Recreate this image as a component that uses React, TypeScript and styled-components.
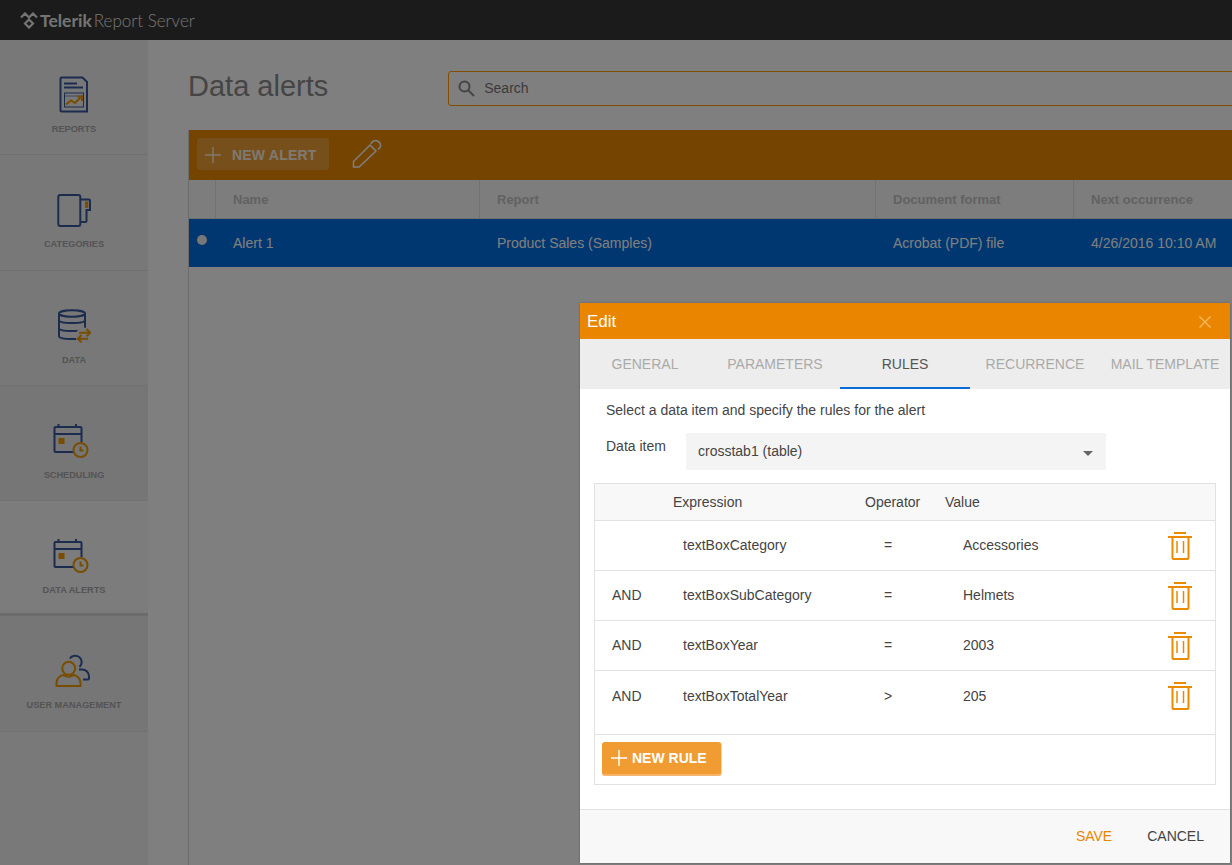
import React from "react";
import styled, { createGlobalStyle } from "styled-components";

const navy = "#37599f";
const amber = "#f09a00";

const GlobalStyle = createGlobalStyle`
  html, body {
    margin: 0;
    height: 100%;
    overflow: hidden;
    font-family: "Liberation Sans", Arial, sans-serif;
  }
  #root {
    height: 100%;
  }
  * {
    box-sizing: border-box;
  }
`;

const Page = styled.div`
  position: relative;
  width: 100%;
  height: 865px;
  display: flex;
  flex-direction: column;
  background: #fff;
  overflow: hidden;
`;

const TopBar = styled.header`
  height: 40px;
  flex: none;
  display: flex;
  align-items: center;
  gap: 2px;
  padding-left: 20px;
  background: #363636;
  color: #e8e8e8;
`;

const LogoBold = styled.span`
  font-family: Lato, sans-serif;
  font-size: 17.5px;
  font-weight: 700;
`;

const LogoLight = styled.span`
  font-family: Lato, sans-serif;
  font-size: 17px;
  font-weight: 300;
`;

const Body = styled.div`
  flex: 1;
  display: flex;
  min-height: 0;
`;

const Sidebar = styled.nav`
  width: 148px;
  flex: none;
  background: #f2f2f2;
`;

const NavItem = styled.div<{ $state?: "hover" | "active" }>`
  height: 115.3px;
  display: flex;
  flex-direction: column;
  align-items: center;
  justify-content: flex-start;
  padding-top: 36px;
  border-bottom: 1px solid #e2e2e2;
  background: ${(p) =>
    p.$state === "active" ? "#f8f8f8" : p.$state === "hover" ? "#ededed" : "#f0f0f0"};
  ${(p) => p.$state === "active" && "border-bottom: 3px solid #d8d8d8;"}
`;

const NavIcon = styled.div`
  height: 38px;
  display: flex;
  align-items: center;
  justify-content: center;
`;

const NavLabel = styled.span`
  margin-top: 10px;
  font-size: 9.2px;
  line-height: 11px;
  font-weight: 700;
  color: #a8a8a8;
`;

const Main = styled.main`
  flex: 1;
  min-width: 0;
  display: flex;
  flex-direction: column;
  padding-left: 40px;
  overflow: hidden;
`;

const TitleRow = styled.div`
  height: 90px;
  flex: none;
  display: flex;
  align-items: center;
  gap: 120px;
`;

const Title = styled.h1`
  margin: 2px 0 0;
  font-size: 29px;
  line-height: 34px;
  font-weight: 400;
  color: #8a8a8a;
`;

const SearchBox = styled.div`
  flex: 1;
  height: 35px;
  margin: 6px -4px 0 0;
  display: flex;
  align-items: center;
  gap: 9px;
  padding-left: 9px;
  border: 1px solid #ff9c00;
  border-radius: 3px;
  font-size: 14px;
  color: #777;
`;

const Grid = styled.section`
  flex: 1;
  border-left: 1px solid #d8d8d8;
`;

const Toolbar = styled.div`
  height: 50px;
  display: flex;
  align-items: center;
  gap: 23px;
  padding: 0 0 2px 8px;
  background: #ea8a00;
`;

const ToolButton = styled.div`
  width: 132px;
  height: 32px;
  display: flex;
  align-items: center;
  gap: 11px;
  padding: 2px 0 0 8px;
  border-radius: 3px;
  background: #f0a23a;
  color: #fff;
  font-size: 14px;
  letter-spacing: 0.2px;
  font-weight: 700;
  opacity: 0.9;
`;

const COLUMNS = "26px 264px 396px 198px 1fr";

const GridHeader = styled.div`
  height: 39px;
  display: grid;
  grid-template-columns: ${COLUMNS};
  background: #fafafa;
  border-bottom: 1px solid #e0e0e0;
`;

const HeaderCell = styled.div`
  display: flex;
  align-items: center;
  padding-left: 17px;
  border-left: 1px solid #e4e4e4;
  font-size: 13px;
  font-weight: 700;
  color: #c4c4c4;
  white-space: nowrap;

  &:first-child {
    border-left: 0;
  }
`;

const GridRow = styled.div`
  height: 48px;
  display: grid;
  grid-template-columns: ${COLUMNS};
  align-items: center;
  background: #006ee0;
  color: #fff;
  font-size: 14px;
`;

const RowCell = styled.div`
  padding-left: 18px;
  white-space: nowrap;
`;

const RowMarker = styled.div`
  align-self: stretch;
  display: flex;
  align-items: center;
  padding: 0 0 6px 8px;
`;

const RowDot = styled.span`
  display: block;
  width: 10px;
  height: 10px;
  border-radius: 50%;
  background: #f0f0f0;
`;

const Scrim = styled.div`
  position: absolute;
  inset: 0;
  background: rgba(0, 0, 0, 0.5);
`;

const Dialog = styled.div`
  position: absolute;
  left: 580px;
  top: 303px;
  width: 650px;
  height: 560px;
  display: flex;
  flex-direction: column;
  background: #fff;
  box-shadow: 0 0 2px rgba(0, 0, 0, 0.3);
`;

const DialogTitle = styled.div`
  height: 36px;
  flex: none;
  display: flex;
  align-items: center;
  justify-content: space-between;
  padding: 1px 19px 0 7px;
  background: #ea8500;
  color: #fff;
  font-size: 17px;
`;

const Tabs = styled.div`
  height: 50px;
  flex: none;
  display: grid;
  grid-template-columns: repeat(5, 130px);
  background: #ededed;
`;

const Tab = styled.div<{ $active?: boolean }>`
  display: flex;
  align-items: center;
  justify-content: center;
  padding-top: 2px;
  font-size: 14px;
  white-space: nowrap;
  color: ${(p) => (p.$active ? "#555" : "#aaa")};
  border-bottom: 2px solid ${(p) => (p.$active ? "#0a6cd6" : "transparent")};
`;

const DialogBody = styled.div`
  flex: 1;
  min-height: 0;
  padding: 13px 14px 0;
  font-size: 14px;
  color: #444;
`;

const Hint = styled.p`
  margin: 0 0 0 12px;
  line-height: 16px;
`;

const FieldRow = styled.div`
  display: flex;
  align-items: flex-start;
  margin: 15px 0 13px 12px;
`;

const FieldLabel = styled.label`
  width: 80px;
  padding-top: 5px;
  line-height: 16px;
`;

const SelectBox = styled.div`
  width: 420px;
  height: 37px;
  display: flex;
  align-items: center;
  justify-content: space-between;
  padding: 0 13px 2px 12px;
  background: #f4f4f4;
`;

const Caret = styled.span`
  width: 0;
  height: 0;
  margin-top: 5px;
  border-left: 5px solid transparent;
  border-right: 5px solid transparent;
  border-top: 5px solid #666;
`;

const RulesPanel = styled.div`
  width: 622px;
  height: 302px;
  border: 1px solid #e2e2e2;
  display: flex;
  flex-direction: column;
`;

const RULE_COLUMNS = "78px 192px 80px 1fr 50px";

const RulesHeader = styled.div`
  height: 37px;
  flex: none;
  display: grid;
  grid-template-columns: ${RULE_COLUMNS};
  align-items: center;
  background: #f8f8f8;
  border-bottom: 1px solid #e2e2e2;
`;

const RulesBody = styled.div`
  flex: 1;
  min-height: 0;
  border-bottom: 1px solid #e2e2e2;
`;

const RuleRow = styled.div<{ $last?: boolean }>`
  height: 50px;
  display: grid;
  grid-template-columns: ${RULE_COLUMNS};
  align-items: center;
  border-bottom: ${(p) => (p.$last ? "0" : "1px solid #e2e2e2")};
`;

const RuleCell = styled.span<{ $indent?: number; $flush?: boolean }>`
  padding-left: ${(p) => p.$indent ?? 0}px;
  padding-bottom: ${(p) => (p.$flush ? 0 : 2)}px;
`;

const TrashButton = styled.span`
  display: flex;
  padding-left: 3px;
`;

const RulesFooter = styled.div`
  height: 49px;
  flex: none;
  padding: 7px 7px 0;
`;

const AddButton = styled.div`
  width: 119px;
  height: 34px;
  display: flex;
  align-items: center;
  gap: 5px;
  padding-left: 9px;
  border-radius: 3px;
  background: #f09c33;
  border-bottom: 2px solid #f6b36a;
  box-shadow: 1px 0 0 #f8cfa0;
  color: #fff;
  font-size: 14px;
  font-weight: 700;
`;

const DialogFooter = styled.div`
  height: 54px;
  flex: none;
  display: flex;
  align-items: center;
  justify-content: flex-end;
  gap: 35px;
  padding: 0 26px 2px 0;
  background: #f8f8f8;
  border-top: 1px solid #e2e2e2;
  font-size: 14px;
`;

const FooterAction = styled.span<{ $primary?: boolean }>`
  color: ${(p) => (p.$primary ? "#ea8500" : "#444")};
`;

const Plus = ({ color, size }: { color: string; size: number }) => (
  <svg width={size} height={size} viewBox="0 0 16 16">
    <path d="M8 0v16M0 8h16" stroke={color} strokeWidth="1.4" fill="none" />
  </svg>
);

const LogoMark = () => (
  <svg width="18" height="17" viewBox="0 0 18 17" fill="none" stroke="#e8e8e8" strokeWidth="2.200">
    <path d="M1 5.500 5 1.500 9 5.500 13 1.500 17 5.500" />
    <path d="M9 7.500 13 11.500 9 15.500 5 11.500Z" />
  </svg>
);

const ReportsIcon = () => (
  <svg width="30" height="38" viewBox="0 0 30 38" fill="none">
    <path d="M2.500 1.500h21l4.500 4.500v29.500H2.500a1 1 0 0 1-1-1V2.500a1 1 0 0 1 1-1Z" stroke={navy} strokeWidth="2" />
    <path d="M5 7.500h13M5 11.500h19" stroke={navy} strokeWidth="2" />
    <rect x="5.500" y="17" width="19" height="14" stroke={navy} strokeWidth="1" />
    <path d="M6 20h18" stroke={navy} strokeWidth="1" opacity=".6" />
    <path d="M7 28.500l5-4 4 2.500 5.500-5.500" stroke={amber} strokeWidth="2" />
    <path d="M18.500 20.500h4.500v4.500" stroke={amber} strokeWidth="2" />
  </svg>
);

const CategoriesIcon = () => (
  <svg width="36" height="36" viewBox="0 0 36 36" fill="none">
    <rect x="2.300" y="3" width="22" height="31" rx="2" stroke={navy} strokeWidth="2" />
    <path d="M25 7.500h8a1 1 0 0 1 1 1V18h-3.500v11a1 1 0 0 1-1 1H25" stroke={navy} strokeWidth="2" />
    <rect x="29" y="9.500" width="3.300" height="6.300" fill={amber} />
  </svg>
);

const DataIcon = () => (
  <svg width="34" height="34" viewBox="0 0 34 34" fill="none">
    <ellipse cx="15" cy="4.500" rx="13" ry="3.200" stroke={navy} strokeWidth="2" />
    <path d="M2 5v6c0 2 6 3 13 3s13-1 13-3V5" stroke={navy} strokeWidth="2" />
    <path d="M2 11v8c0 2 6 3 13 3s13-1 13-3v-8" stroke={navy} strokeWidth="2" />
    <path d="M2 19v8c0 2 6 3 13 3s13-1 13-3v-8" stroke={navy} strokeWidth="2" />
    <circle cx="27" cy="27" r="8.500" fill="#ececec" />
    <path d="M22 23.700h11M29.500 20l3.700 3.700-3.700 3.700" stroke={amber} strokeWidth="2" />
    <path d="M31 29.700H21M24.500 26l-3.700 3.700 3.700 3.700" stroke={amber} strokeWidth="2" />
  </svg>
);

const CalendarIcon = () => (
  <svg width="43" height="36" viewBox="0 0 43 36" fill="none">
    <path d="M21 29H2.500a1 1 0 0 1-1-1V5a1 1 0 0 1 1-1h25a1 1 0 0 1 1 1v14" stroke={navy} strokeWidth="2" />
    <path d="M2 11h26M5.500 1v4M23 1v4" stroke={navy} strokeWidth="2" />
    <rect x="5.500" y="15" width="6" height="6" fill={amber} />
    <circle cx="27.500" cy="27" r="7" stroke={amber} strokeWidth="2" />
    <path d="M27.500 23.500v4h3" stroke={amber} strokeWidth="2" />
  </svg>
);

const UsersIcon = () => (
  <svg width="38" height="34" viewBox="0 0 38 34" fill="none">
    <path d="M14.800 4.500A6.500 6.500 0 1 1 24.500 13" stroke={navy} strokeWidth="2" />
    <path d="M24 15.500h3c4 0 7 3 7 7v2a1 1 0 0 1-1 1h-5" stroke={navy} strokeWidth="2" />
    <circle cx="13.700" cy="14.300" r="6.500" stroke={amber} strokeWidth="2" fill="#ededed" />
    <path d="M1.500 32v-3c0-4 3-7.500 7-8 3 2 7 2 10 0 4 .5 7 4 7 8v3Z" stroke={amber} strokeWidth="2" fill="#ededed" />
  </svg>
);

const SearchIcon = () => (
  <svg width="17" height="17" viewBox="0 0 17 17" fill="none" stroke="#888" strokeWidth="2">
    <circle cx="6.500" cy="6.500" r="5" />
    <path d="M10.500 10.500 16 16" />
  </svg>
);

const PencilIcon = () => (
  <svg width="30" height="30" viewBox="0 0 30 30" fill="none" stroke="#fff" strokeWidth="1.500">
    <path d="M1.500 28v-5.500L18 6l6 6L7 28Z" />
    <path d="M19 5c1-3 4-4 6.500-3s4 4 2.500 6.500l-2 2" />
  </svg>
);

const CloseIcon = () => (
  <svg width="12" height="12" viewBox="0 0 12 12" stroke="#f7b860" strokeWidth="1.400">
    <path d="M.5.500l11 11M11.500.500l-11 11" />
  </svg>
);

const TrashIcon = () => (
  <svg width="24" height="28" viewBox="0 0 24 28" fill="none" stroke="#ea8a00" strokeWidth="2">
    <path d="M0 5h24M6 1h12" />
    <path d="M4.500 5v21a1 1 0 0 0 1 1h14a1 1 0 0 0 1-1V5" />
    <path d="M9 9v12M15.500 9v12" strokeWidth="1.500" />
  </svg>
);

const navItems = [
  { label: "REPORTS", icon: <ReportsIcon /> },
  { label: "CATEGORIES", icon: <CategoriesIcon /> },
  { label: "DATA", icon: <DataIcon /> },
  { label: "SCHEDULING", icon: <CalendarIcon />, state: "hover" as const },
  { label: "DATA ALERTS", icon: <CalendarIcon />, state: "active" as const },
  { label: "USER MANAGEMENT", icon: <UsersIcon />, state: "hover" as const },
];

const rules = [
  { join: "", expression: "textBoxCategory", operator: "=", value: "Accessories" },
  { join: "AND", expression: "textBoxSubCategory", operator: "=", value: "Helmets" },
  { join: "AND", expression: "textBoxYear", operator: "=", value: "2003" },
  { join: "AND", expression: "textBoxTotalYear", operator: ">", value: "205" },
];

const tabs = ["GENERAL", "PARAMETERS", "RULES", "RECURRENCE", "MAIL TEMPLATE"];

const App: React.FC = () => {
  return (
    <Page>
      <GlobalStyle />
      <TopBar>
        <LogoMark />
        <LogoBold>Telerik</LogoBold>
        <LogoLight>Report Server</LogoLight>
      </TopBar>
      <Body>
        <Sidebar>
          {navItems.map((item) => (
            <NavItem key={item.label} $state={item.state}>
              <NavIcon>{item.icon}</NavIcon>
              <NavLabel>{item.label}</NavLabel>
            </NavItem>
          ))}
        </Sidebar>
        <Main>
          <TitleRow>
            <Title>Data alerts</Title>
            <SearchBox>
              <SearchIcon />
              Search
            </SearchBox>
          </TitleRow>
          <Grid>
            <Toolbar>
              <ToolButton>
                <Plus color="#fff" size={16} />
                NEW ALERT
              </ToolButton>
              <PencilIcon />
            </Toolbar>
            <GridHeader>
              <HeaderCell />
              <HeaderCell>Name</HeaderCell>
              <HeaderCell>Report</HeaderCell>
              <HeaderCell>Document format</HeaderCell>
              <HeaderCell>Next occurrence</HeaderCell>
            </GridHeader>
            <GridRow>
              <RowMarker>
                <RowDot />
              </RowMarker>
              <RowCell>Alert 1</RowCell>
              <RowCell>Product Sales (Samples)</RowCell>
              <RowCell>Acrobat (PDF) file</RowCell>
              <RowCell>4/26/2016 10:10 AM</RowCell>
            </GridRow>
          </Grid>
        </Main>
      </Body>
      <Scrim />
      <Dialog>
        <DialogTitle>
          Edit
          <CloseIcon />
        </DialogTitle>
        <Tabs>
          {tabs.map((tab) => (
            <Tab key={tab} $active={tab === "RULES"}>
              {tab}
            </Tab>
          ))}
        </Tabs>
        <DialogBody>
          <Hint>Select a data item and specify the rules for the alert</Hint>
          <FieldRow>
            <FieldLabel>Data item</FieldLabel>
            <SelectBox>
              crosstab1 (table)
              <Caret />
            </SelectBox>
          </FieldRow>
          <RulesPanel>
            <RulesHeader>
              <RuleCell $flush />
              <RuleCell $flush>Expression</RuleCell>
              <RuleCell $flush>Operator</RuleCell>
              <RuleCell $flush>Value</RuleCell>
            </RulesHeader>
            <RulesBody>
              {rules.map((rule, index) => {
                const last = index === rules.length - 1;
                return (
                  <RuleRow key={rule.expression} $last={last}>
                    <RuleCell $indent={17} $flush={last}>{rule.join}</RuleCell>
                    <RuleCell $indent={10} $flush={last}>{rule.expression}</RuleCell>
                    <RuleCell $indent={19} $flush={last}>{rule.operator}</RuleCell>
                    <RuleCell $indent={18} $flush={last}>{rule.value}</RuleCell>
                    <TrashButton>
                      <TrashIcon />
                    </TrashButton>
                  </RuleRow>
                );
              })}
            </RulesBody>
            <RulesFooter>
              <AddButton>
                <Plus color="#fff" size={16} />
                NEW RULE
              </AddButton>
            </RulesFooter>
          </RulesPanel>
        </DialogBody>
        <DialogFooter>
          <FooterAction $primary>SAVE</FooterAction>
          <FooterAction>CANCEL</FooterAction>
        </DialogFooter>
      </Dialog>
    </Page>
  );
};

export default App;
